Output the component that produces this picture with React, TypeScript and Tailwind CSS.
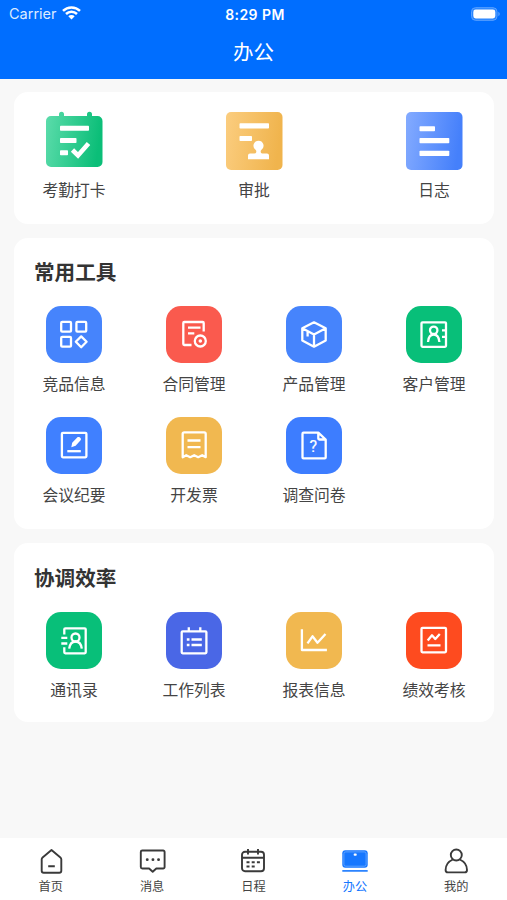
import React from 'react';

type Item = { title: string; color: string; icon: React.ReactNode };

const shortcuts = [
  {
    title: '考勤打卡',
    icon: (
      <svg width="57" height="59" viewBox="0 0 57 59">
        <defs>
          <linearGradient id="green" x1="0" y1="0" x2="1" y2="0.15">
            <stop offset="0" stopColor="#5cdcab" />
            <stop offset="1" stopColor="#0bbe78" />
          </linearGradient>
        </defs>
        <path
          fill="url(#green)"
          d="M5 5h8V3.300a2.500 2.500 0 0 1 5 0V5h23V3.300a2.500 2.500 0 0 1 5 0V5h5.500a5 5 0 0 1 5 5v41a5 5 0 0 1-5 5H5a5 5 0 0 1-5-5V10a5 5 0 0 1 5-5z"
        />
        <g fill="#fff">
          <rect x="14" y="14.800" width="29" height="5" rx="0.800" />
          <rect x="14" y="27" width="16.500" height="5" rx="0.800" />
          <rect x="14" y="39.300" width="8" height="5" rx="0.800" />
        </g>
        <path d="M26.500 39l5.500 5.500 10.500-12" fill="none" stroke="#fff" strokeWidth="4.600" />
      </svg>
    ),
  },
  {
    title: '审批',
    icon: (
      <svg width="57" height="59" viewBox="0 0 57 59">
        <defs>
          <linearGradient id="gold" x1="0" y1="0" x2="1" y2="0.15">
            <stop offset="0" stopColor="#fbcd7f" />
            <stop offset="1" stopColor="#f0b44d" />
          </linearGradient>
        </defs>
        <rect y="1" width="56.500" height="58" rx="5" fill="url(#gold)" />
        <g fill="#fff">
          <rect x="13.500" y="12.300" width="29.500" height="5.200" rx="0.800" />
          <rect x="13.500" y="25" width="12.500" height="5" rx="0.800" />
          <path d="M32.500 29.700a5 5 0 0 1 3 9c-.9.700-.9 1.600-.7 2.500.2 1 1 1.300 2.500 1.300H41a2 2 0 0 1 2 2v3.800H22v-3.800a2 2 0 0 1 2-2h3.700c1.500 0 2.300-.3 2.500-1.300.2-.9.200-1.800-.7-2.500a5 5 0 0 1 3-9z" />
        </g>
      </svg>
    ),
  },
  {
    title: '日志',
    icon: (
      <svg width="57" height="59" viewBox="0 0 57 59">
        <defs>
          <linearGradient id="blue" x1="0" y1="0" x2="1" y2="0.15">
            <stop offset="0" stopColor="#84abff" />
            <stop offset="1" stopColor="#4580fb" />
          </linearGradient>
        </defs>
        <rect y="1" width="56.500" height="58" rx="5" fill="url(#blue)" />
        <g fill="#fff">
          <rect x="13.500" y="15.300" width="15.500" height="5" rx="0.800" />
          <rect x="13.500" y="27" width="29.800" height="5.300" rx="0.800" />
          <rect x="13.500" y="39.700" width="29.800" height="5.300" rx="0.800" />
        </g>
      </svg>
    ),
  },
];

const tools: Item[] = [
  {
    title: '竞品信息',
    color: 'bg-[#4684fc]',
    icon: (
      <>
        <rect x="15.200" y="15.900" width="9.800" height="9.800" rx="1" />
        <rect x="30.400" y="15.900" width="9.800" height="9.800" rx="1" />
        <rect x="15.200" y="30.900" width="9.800" height="9.800" rx="1" />
        <path d="M35.200 30.400l5.400 5.400-5.400 5.400-5.400-5.400z" />
      </>
    ),
  },
  {
    title: '合同管理',
    color: 'bg-[#fa5a4e]',
    icon: (
      <>
        <path d="M25.500 39H18.300a1 1 0 0 1-1-1V17a1 1 0 0 1 1-1h18.400a1 1 0 0 1 1 1v8.500M22 21.700h12.500M22 27.300h6.300" />
        <circle cx="34.300" cy="35" r="5.500" />
        <circle cx="34.300" cy="35" r="1.800" fill="#fff" stroke="none" />
      </>
    ),
  },
  {
    title: '产品管理',
    color: 'bg-[#4684fc]',
    icon: (
      <path d="M28 16.300l11.700 6v12.200L28 40.700l-11.700-6.200V22.300zM16.300 22.300L28 28.400l11.700-6.100M28 28.400v12.300M21.600 25.400v5" />
    ),
  },
  {
    title: '客户管理',
    color: 'bg-[#08bf79]',
    icon: (
      <>
        <rect x="15.500" y="16.300" width="24.500" height="24.500" rx="1" />
        <path d="M36 24.300h3.500M36 30.800h3.500" />
        <circle cx="27.700" cy="24.300" r="3.700" />
        <path d="M22 36c.4-4.600 2.400-7.500 5.700-7.500s5.300 2.900 5.700 7.500" />
      </>
    ),
  },
  {
    title: '会议纪要',
    color: 'bg-[#4080ff]',
    icon: (
      <>
        <rect x="15.900" y="15.800" width="24.500" height="24.500" rx="1" />
        <path d="M21.300 34.200h13.500" />
        <path d="M25.300 30.300l.9-4.600 5-5.300c1-1 3.200-.4 3.700 1.400.2.600 0 1.100-.3 1.500l-5 5.400z" fill="#fff" stroke="none" />
      </>
    ),
  },
  {
    title: '开发票',
    color: 'bg-[#f1b850]',
    icon: (
      <>
        <path d="M16.700 40.200V16.800a1.500 1.500 0 0 1 1.500-1.500h20a1.500 1.500 0 0 1 1.500 1.500v23.400l-3.500-2-4 2-4-2-4 2-4-2z" />
        <path d="M21.500 23.500h13M21.500 30.200h13" />
      </>
    ),
  },
  {
    title: '调查问卷',
    color: 'bg-[#3d7dff]',
    icon: (
      <>
        <path d="M32.300 15.700H17.500a1 1 0 0 0-1 1v23.700a1 1 0 0 0 1 1h21.200a1 1 0 0 0 1-1V22.500zM32.300 15.700v5.800a1 1 0 0 0 1 1h6.400" />
        <text
          x="27.300"
          y="35.300"
          textAnchor="middle"
          fill="#fff"
          stroke="#fff"
          strokeWidth="0.200"
          className="font-['Roboto',sans-serif] text-[16px]"
        >
          ?
        </text>
      </>
    ),
  },
];

const efficiency: Item[] = [
  {
    title: '通讯录',
    color: 'bg-[#08bf79]',
    icon: (
      <>
        <path d="M18.300 22.500V17.300a1 1 0 0 1 1-1h19.400a1 1 0 0 1 1 1v23a1 1 0 0 1-1 1H19.300a1 1 0 0 1-1-1v-5.100M15.300 25.800h6M15.300 31.500h6" />
        <circle cx="29.500" cy="25.500" r="4" />
        <path d="M23.200 36.700c.6-4.600 2.800-7.200 6.300-7.200s5.700 2.600 6.300 7.200" />
      </>
    ),
  },
  {
    title: '工作列表',
    color: 'bg-[#4a67e6]',
    icon: (
      <>
        <rect x="15.700" y="19.300" width="24.700" height="22" rx="1" />
        <path d="M22.800 15.300v4M34.300 15.300v4M20.800 27.500h2.700M25.500 27.500h10.300M20.800 33h2.700M25.500 33h10.300" />
      </>
    ),
  },
  {
    title: '报表信息',
    color: 'bg-[#f1b850]',
    icon: <path d="M15.900 17.200V38h25M21.500 31.300l5-7 5 6.400 8-8.800" />,
  },
  {
    title: '绩效考核',
    color: 'bg-[#fe4b1f]',
    icon: (
      <>
        <rect x="15.500" y="15.800" width="24.500" height="24.500" rx="1" />
        <path d="M21.700 28.500l4.300-5.200 3.300 3.700 4.500-5M21.500 33.300h13" />
      </>
    ),
  },
];

const tabs = [
  {
    title: '首页',
    icon: <path d="M14.500 3l8.900 7.400c.6.500.9 1 .9 1.800v11.500a2 2 0 0 1-2 2H6.700a2 2 0 0 1-2-2V12.200c0-.8.300-1.300.9-1.800zM11.200 19.200h6.600" />,
  },
  {
    title: '消息',
    icon: (
      <>
        <path d="M4.300 3.500h20.800a1.500 1.500 0 0 1 1.500 1.500v15a1.500 1.500 0 0 1-1.500 1.500h-6.800l-3.600 3.300-3.600-3.300H4.300a1.500 1.500 0 0 1-1.500-1.500V5a1.500 1.500 0 0 1 1.500-1.500z" />
        <path d="M9.200 12.700h.1M14.900 12.700h.1M20.500 12.700h.1" strokeWidth="2.800" strokeLinecap="round" />
      </>
    ),
  },
  {
    title: '日程',
    icon: (
      <>
        <rect x="3" y="4.800" width="22" height="19.500" rx="3" />
        <path d="M3 10.800h22M9 2v5.500M19 2v5.500M7.500 15.300h3M12.700 15.300h3M17.900 15.300h3M7.500 19.500h3M12.700 19.500h3" />
      </>
    ),
  },
  {
    title: '办公',
    active: true,
    icon: (
      <>
        <rect x="1.300" y="3.300" width="25.400" height="17.500" rx="3" fill="#1677ff" stroke="none" />
        <rect x="2.900" y="4.900" width="22.200" height="14.300" rx="1.800" stroke="#8bbcff" strokeWidth="0.600" />
        <rect x="12.700" y="6.500" width="3" height="2.200" rx="0.800" fill="#fff" stroke="none" />
        <path d="M1.300 23.900h25.400" stroke="#1677ff" strokeWidth="1.600" />
      </>
    ),
  },
  {
    title: '我的',
    icon: (
      <>
        <circle cx="14.300" cy="8" r="5.500" />
        <path d="M10.800 12.500C6.300 14.500 3.600 18.500 3.600 23c0 1.600.8 2.400 2.300 2.400h16.800c1.500 0 2.300-.8 2.300-2.400 0-4.500-2.700-8.500-7.200-10.500" />
      </>
    ),
  },
];

const Section: React.FC<{ title: string; items: Item[]; className: string }> = ({ title, items, className }) => (
  <section className={`bg-white rounded-[14px] ${className}`}>
    <h2 className="pl-5 text-[20.600px] leading-7 font-bold text-[#333]">{title}</h2>
    <div className="grid grid-cols-4 gap-y-[15px] mt-[21px]">
      {items.map((item) => (
        <button key={item.title} className="flex flex-col items-center h-24">
          <div className={`w-[56.500px] h-[56.500px] rounded-[15px] ${item.color}`}>
            <svg width="56.500" height="56.500" viewBox="0 0 56.500 56.500" fill="none" stroke="#fff" strokeWidth="2.300" strokeLinejoin="round">
              {item.icon}
            </svg>
          </div>
          <span className="mt-[9px] text-[15.800px] leading-6 text-[#444]">{item.title}</span>
        </button>
      ))}
    </div>
  </section>
);

const App: React.FC = () => {
  return (
    <div className="h-[900px] w-full flex flex-col bg-[#f8f8f8] font-['Noto_Sans_CJK_SC',sans-serif] overflow-hidden">
      <header className="h-[79px] shrink-0 bg-[#006eff] text-white">
        <div className="grid grid-cols-3 items-center h-7 pl-[9px] pr-[6px] font-['Inter',sans-serif] text-[14.500px]">
          <div className="flex items-center gap-[5px]">
            <span className="text-[#dcebff]">Carrier</span>
            <svg className="-mt-[2px]" width="19" height="14" viewBox="0 0 19 14" fill="none" stroke="#fff" strokeWidth="2.500">
              <path d="M1 4.900a12.200 12.200 0 0 1 17 0M4 8a7.900 7.900 0 0 1 11 0" />
              <path d="M9.500 13.600L6.300 10.300a4.600 4.600 0 0 1 6.400 0z" fill="#fff" stroke="none" />
            </svg>
          </div>
          <span className="text-center font-semibold text-[14px] tracking-[0.450px]">8:29 PM</span>
          <svg className="justify-self-end -mt-[1px]" width="30" height="14" viewBox="0 0 30 14">
            <rect x="0.500" y="0.700" width="25.500" height="12.600" rx="4" fill="#2985ff" stroke="#5ca2ff" />
            <rect x="2.300" y="2.500" width="22" height="9" rx="2.400" fill="#fff" />
            <path d="M27.300 4.800c2 .8 2 3.600 0 4.400z" fill="#5ca2ff" />
          </svg>
        </div>
        <h1 className="text-center text-[20.500px] leading-[30px] mt-2">办公</h1>
      </header>

      <main className="flex-1 pl-[14px] pr-[13px] pt-[13px] flex flex-col gap-[14px]">
        <section className="bg-white rounded-[14px] h-[132px] flex justify-between pt-[19px]">
          {shortcuts.map((item) => (
            <button key={item.title} className="w-[120px] h-24 flex flex-col items-center">
              {item.icon}
              <span className="mt-2 text-[15.800px] leading-6 text-[#444]">{item.title}</span>
            </button>
          ))}
        </section>
        <Section title="常用工具" items={tools} className="h-[291px] pt-[19px]" />
        <Section title="协调效率" items={efficiency} className="h-[179px] pt-5" />
      </main>

      <nav className="h-[62px] shrink-0 bg-white grid grid-cols-5">
        {tabs.map((tab) => (
          <button key={tab.title} className="flex flex-col items-center pt-[9px]">
            <svg width="28" height="28" viewBox="0 0 28 28" fill="none" stroke="#3a3a3a" strokeWidth="1.900" strokeLinejoin="round">
              {tab.icon}
            </svg>
            <span className={`text-[12.200px] leading-[18px] mt-[2px] ${tab.active ? 'text-[#1677ff]' : 'text-[#444]'}`}>{tab.title}</span>
          </button>
        ))}
      </nav>
    </div>
  );
};

export default App;
